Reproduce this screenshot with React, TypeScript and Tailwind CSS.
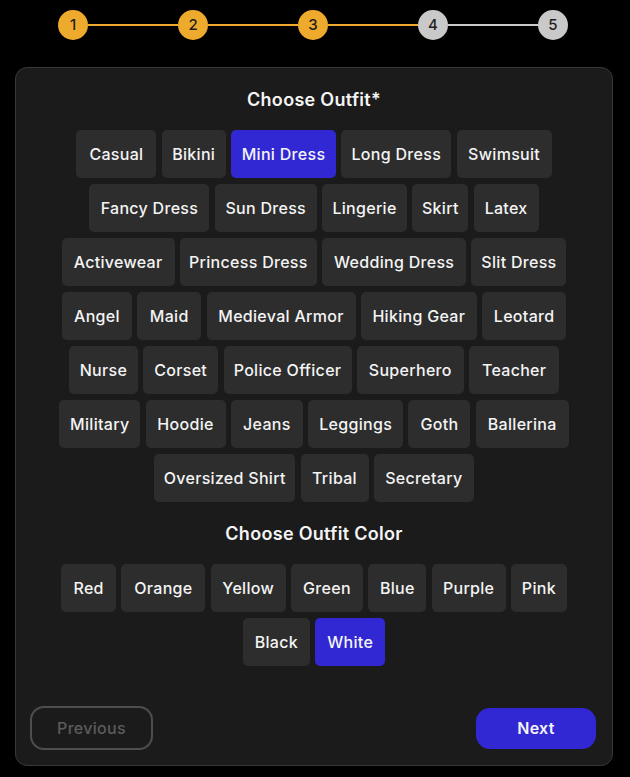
import React from "react";

type Item = { label: string; w: string; selected?: boolean };

const outfitRows: Item[][] = [
  [
    { label: "Casual", w: "w-[80px]" },
    { label: "Bikini", w: "w-[64px]" },
    { label: "Mini Dress", w: "w-[105px]", selected: true },
    { label: "Long Dress", w: "w-[110px]" },
    { label: "Swimsuit", w: "w-[95px]" },
  ],
  [
    { label: "Fancy Dress", w: "w-[120px]" },
    { label: "Sun Dress", w: "w-[102px]" },
    { label: "Lingerie", w: "w-[85px]" },
    { label: "Skirt", w: "w-[56px]" },
    { label: "Latex", w: "w-[65px]" },
  ],
  [
    { label: "Activewear", w: "w-[113px]" },
    { label: "Princess Dress", w: "w-[137px]" },
    { label: "Wedding Dress", w: "w-[144px]" },
    { label: "Slit Dress", w: "w-[95px]" },
  ],
  [
    { label: "Angel", w: "w-[70px]" },
    { label: "Maid", w: "w-[64px]" },
    { label: "Medieval Armor", w: "w-[149px]" },
    { label: "Hiking Gear", w: "w-[116px]" },
    { label: "Leotard", w: "w-[84px]" },
  ],
  [
    { label: "Nurse", w: "w-[69px]" },
    { label: "Corset", w: "w-[75px]" },
    { label: "Police Officer", w: "w-[128px]" },
    { label: "Superhero", w: "w-[107px]" },
    { label: "Teacher", w: "w-[90px]" },
  ],
  [
    { label: "Military", w: "w-[81px]" },
    { label: "Hoodie", w: "w-[80px]" },
    { label: "Jeans", w: "w-[72px]" },
    { label: "Leggings", w: "w-[95px]" },
    { label: "Goth", w: "w-[62px]" },
    { label: "Ballerina", w: "w-[93px]" },
  ],
  [
    { label: "Oversized Shirt", w: "w-[141px]" },
    { label: "Tribal", w: "w-[68px]" },
    { label: "Secretary", w: "w-[100px]" },
  ],
];

const colorRows: Item[][] = [
  [
    { label: "Red", w: "w-[55px]" },
    { label: "Orange", w: "w-[84px]" },
    { label: "Yellow", w: "w-[75px]" },
    { label: "Green", w: "w-[72px]" },
    { label: "Blue", w: "w-[58px]" },
    { label: "Purple", w: "w-[74px]" },
    { label: "Pink", w: "w-[56px]" },
  ],
  [
    { label: "Black", w: "w-[67px]" },
    { label: "White", w: "w-[70px]", selected: true },
  ],
];

function Chip({ item }: { item: Item }) {
  return (
    <button
      className={
        "h-[48px] shrink-0 rounded-[5px] text-[16px] tracking-[0.3px] font-medium text-[#f4f4f4] flex items-center justify-center whitespace-nowrap " +
        item.w +
        " " +
        (item.selected ? "bg-[#3128d3]" : "bg-[#2d2d2d]")
      }
    >
      {item.label}
    </button>
  );
}

function Rows({ rows }: { rows: Item[][] }) {
  return (
    <div className="flex flex-col gap-y-[6px]">
      {rows.map((row, i) => (
        <div key={i} className="flex justify-center gap-x-[5.3px]">
          {row.map((it) => (
            <Chip key={it.label} item={it} />
          ))}
        </div>
      ))}
    </div>
  );
}

function Step({ n, done }: { n: number; done: boolean }) {
  return (
    <div
      className={
        "w-[30px] h-[30px] rounded-full flex items-center justify-center text-[15px] font-medium text-[#1e1e1e] shrink-0 " +
        (done ? "bg-[#eeaa2c]" : "bg-[#c9c9c9]")
      }
    >
      {n}
    </div>
  );
}

export default function App() {
  return (
    <div
      className="w-[630px] h-[777px] bg-black overflow-hidden"
      style={{ fontFamily: "Inter, 'Noto Sans', sans-serif" }}
    >
      <div className="pt-[10px] w-[510px] ml-[58px] flex items-center">
        <Step n={1} done />
        <div className="flex-1 h-[2px] bg-[#eeaa2c]" />
        <Step n={2} done />
        <div className="flex-1 h-[2px] bg-[#eeaa2c]" />
        <Step n={3} done />
        <div className="flex-1 h-[2px] bg-[#eeaa2c]" />
        <Step n={4} done={false} />
        <div className="flex-1 h-[2px] bg-[#c9c9c9]" />
        <Step n={5} done={false} />
      </div>

      <div className="ml-[15px] mt-[27px] w-[598px] h-[699px] rounded-[12px] border border-[#383838] bg-[#1b1b1b] flex flex-col">
        <h2 className="pt-[18px] text-center text-[18px] leading-[28px] tracking-[0.3px] font-semibold text-[#f4f4f4]">
          Choose Outfit*
        </h2>
        <div className="mt-[16px]">
          <Rows rows={outfitRows} />
        </div>
        <h2 className="mt-[18px] text-center text-[18px] leading-[28px] tracking-[0.3px] font-semibold text-[#f4f4f4]">
          Choose Outfit Color
        </h2>
        <div className="mt-[16px]">
          <Rows rows={colorRows} />
        </div>
        <div className="mt-auto pb-[15px] pl-[14px] pr-[16px] flex items-center justify-between">
          <button className="w-[123px] h-[44px] rounded-[14px] border-2 border-[#4e4e4e] text-[16px] tracking-[0.3px] font-medium text-[#5c5c5c]">
            Previous
          </button>
          <button className="w-[120px] h-[41px] rounded-[14px] bg-[#3128d3] text-[16px] tracking-[0.3px] font-semibold text-[#f4f4f4]">
            Next
          </button>
        </div>
      </div>
    </div>
  );
}
